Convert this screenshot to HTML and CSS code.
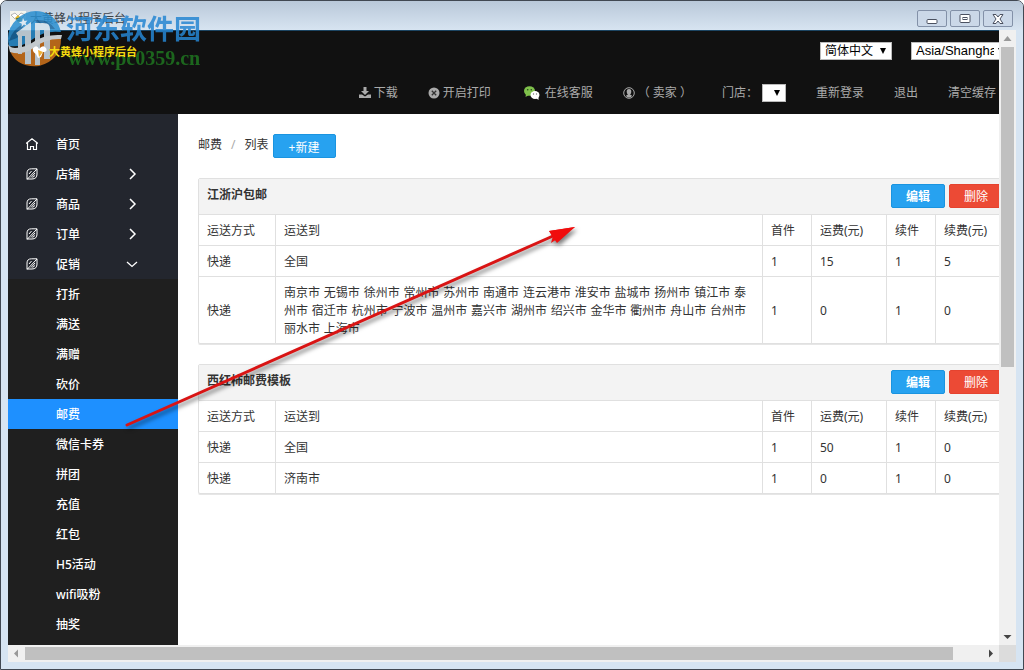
FILE: index.html
```html
<!DOCTYPE html>
<html lang="zh-CN">
<head>
<meta charset="utf-8">
<title>大黄蜂小程序后台</title>
<link rel="stylesheet" href="styles.css">
</head>
<body>
<svg class="defs" aria-hidden="true">
  <symbol id="leaf" viewBox="0 0 12 12"><path d="M1 11V5Q1 .8 5.500 .8H11V6q0 5-5 5zM11 1L1 11.500M3 6l2.500-3M5 9.500L9 5M6.500 9.500L9 7.500" fill="none" stroke="currentColor" stroke-width="1"/></symbol>
  <symbol id="right" viewBox="0 0 12 12"><path d="M4 1l5 5-5 5" fill="none" stroke="currentColor" stroke-width="1.5"/></symbol>
  <symbol id="down" viewBox="0 0 12 12"><path d="M1 4l5 4.500L11 4" fill="none" stroke="currentColor" stroke-width="1.3"/></symbol>
</svg>
<div class="window">
  <header class="titlebar">
    <svg class="app-icon" viewBox="0 0 16 16" aria-hidden="true"><rect width="16" height="16" fill="#f4f4ee"/><path d="M1 4l4-2 3 3 3-3 4 2-4 4H5z" fill="#fff" stroke="#999" stroke-width=".7"/><path d="M5 7l3-3 4 4-3 4z" fill="#e2b82d"/><path d="M6 8l4-1M7 10l3-1" stroke="#355a2b"/></svg>
    <span class="title">大黄蜂小程序后台</span>
    <div class="caption">
      <button type="button" aria-label="最小化"><svg viewBox="0 0 14 12"><rect x="2" y="6.500" width="10" height="4" rx="1" fill="#fff" stroke="#4b5160"/></svg></button>
      <button type="button" aria-label="最大化"><svg viewBox="0 0 14 12"><rect x="2" y="1.500" width="10" height="8" rx="1" fill="#fff" stroke="#4b5160"/><rect x="5" y="4.500" width="4" height="2" fill="#fff" stroke="#4b5160"/></svg></button>
      <button type="button" aria-label="关闭"><svg viewBox="0 0 14 12"><path d="M2 1.500h3l2 2.500 2-2.500h3L9 6l3 4.500H9L7 8l-2 2.500H2L5 6z" fill="#fff" stroke="#4b5160"/></svg></button>
    </div>
  </header>

  <div class="viewport">
    <div class="clip">
      <div class="page">
        <header class="topbar">
          <div class="brand">
            <svg viewBox="0 0 16 14" aria-hidden="true"><path d="M1 3q4-4 6 1 4-5 7-1 2 4-3 4l-2 5-3 1-2-4Q0 7 1 3z" fill="#fff"/><path d="M6 5l5 2-4 5z" fill="#efb23a"/></svg>
            <span>大黄蜂小程序后台</span>
          </div>
          <div class="tools">
            <div class="locale">
              <span class="pick lang"><select aria-label="语言"><option>简体中文</option></select><i></i></span>
              <span class="pick zone"><select aria-label="时区"><option>Asia/Shanghai</option></select><i></i></span>
            </div>
            <nav class="nav">
              <a href="#"><svg class="ic" viewBox="0 0 12 12"><path d="M4.500 0h3v4H10L6 8 2 4h2.500z" fill="currentColor"/><path d="M0 7.500h3l3 2 3-2h3V11H0z" fill="currentColor"/></svg>下载</a>
              <a href="#"><svg class="ic" viewBox="0 0 12 12"><circle cx="6" cy="6" r="5.500" fill="currentColor"/><path d="M3.800 3.800l4.400 4.400M8.200 3.800L3.800 8.200" stroke="#333" stroke-width="1.300"/></svg>开启打印</a>
              <a href="#"><svg class="wx" viewBox="0 0 16 14"><ellipse cx="5.500" cy="5" rx="5.500" ry="4.800" fill="#7fc14b"/><path d="M2 8l-.5 3L5 9z" fill="#7fc14b"/><ellipse cx="11" cy="9" rx="4.500" ry="4" fill="#fff"/><path d="M12 12l2.500 2V11z" fill="#fff"/><circle cx="3.700" cy="3.700" r=".8" fill="#25451a"/><circle cx="7.300" cy="3.700" r=".8" fill="#25451a"/><circle cx="9.500" cy="8" r=".7" fill="#777"/><circle cx="12.500" cy="8" r=".7" fill="#777"/></svg>在线客服</a>
              <a href="#"><svg class="ic" viewBox="0 0 12 12"><circle cx="6" cy="6" r="5.300" fill="none" stroke="currentColor"/><path d="M6 2Q8.500 2 8.300 5 8 7 7 7.500q2 .5 2 1.500-3 3-6 0 0-1 2-1.500Q4 7 3.700 5 3.500 2 6 2z" fill="currentColor"/></svg>（ 卖家 ）</a>
              <span class="store"><label for="store">门店：</label><span class="pick mini"><select id="store"><option></option></select><i></i></span></span>
              <a href="#">重新登录</a>
              <a href="#">退出</a>
              <a href="#">清空缓存</a>
            </nav>
          </div>
        </header>

        <div class="body">
          <aside class="sidebar">
            <a class="item" href="#"><svg viewBox="0 0 12 12"><path d="M0 5.500L6 .8l6 4.700M1.500 4.500v7H4.500v-3h3v3h3v-7" fill="none" stroke="currentColor" stroke-width="1.200"/></svg><span>首页</span></a>
            <a class="item" href="#"><svg><use href="#leaf"/></svg><span>店铺</span><svg><use href="#right"/></svg></a>
            <a class="item" href="#"><svg><use href="#leaf"/></svg><span>商品</span><svg><use href="#right"/></svg></a>
            <a class="item" href="#"><svg><use href="#leaf"/></svg><span>订单</span><svg><use href="#right"/></svg></a>
            <a class="item" href="#"><svg><use href="#leaf"/></svg><span>促销</span><svg><use href="#down"/></svg></a>
            <div class="submenu">
              <a href="#">打折</a>
              <a href="#">满送</a>
              <a href="#">满赠</a>
              <a href="#">砍价</a>
              <a class="active" href="#">邮费</a>
              <a href="#">微信卡券</a>
              <a href="#">拼团</a>
              <a href="#">充值</a>
              <a href="#">红包</a>
              <a href="#">H5活动</a>
              <a href="#">wifi吸粉</a>
              <a href="#">抽奖</a>
            </div>
          </aside>

          <main class="main">
            <div class="crumbs">
              <a href="#">邮费</a><span class="sep">/</span><span>列表</span>
              <button class="btn new" type="button">+新建</button>
            </div>

            <section class="panel">
              <div class="panel-head"><h2>江浙沪包邮</h2><div class="actions"><button class="btn edit" type="button">编辑</button><button class="btn del" type="button">删除</button></div></div>
              <table>
                <colgroup><col class="c-way"><col><col class="c-n"><col class="c-fee"><col class="c-n"><col class="c-last"></colgroup>
                <tr><th>运送方式</th><th>运送到</th><th>首件</th><th>运费(元)</th><th>续件</th><th>续费(元)</th></tr>
                <tr><td>快递</td><td>全国</td><td>1</td><td>15</td><td>1</td><td>5</td></tr>
                <tr><td>快递</td><td class="cities">南京市 无锡市 徐州市 常州市 苏州市 南通市 连云港市 淮安市 盐城市 扬州市 镇江市 泰州市 宿迁市 杭州市 宁波市 温州市 嘉兴市 湖州市 绍兴市 金华市 衢州市 舟山市 台州市 丽水市 上海市</td><td>1</td><td>0</td><td>1</td><td>0</td></tr>
              </table>
            </section>

            <section class="panel">
              <div class="panel-head"><h2>西红柿邮费模板</h2><div class="actions"><button class="btn edit" type="button">编辑</button><button class="btn del" type="button">删除</button></div></div>
              <table>
                <colgroup><col class="c-way"><col><col class="c-n"><col class="c-fee"><col class="c-n"><col class="c-last"></colgroup>
                <tr><th>运送方式</th><th>运送到</th><th>首件</th><th>运费(元)</th><th>续件</th><th>续费(元)</th></tr>
                <tr><td>快递</td><td>全国</td><td>1</td><td>50</td><td>1</td><td>0</td></tr>
                <tr><td>快递</td><td>济南市</td><td>1</td><td>0</td><td>1</td><td>0</td></tr>
              </table>
            </section>
          </main>
        </div>
      </div>
    </div>

    <div class="vbar">
      <svg class="dim" viewBox="0 0 17 17"><path d="M8.500 6l4 5h-8z" fill="currentColor"/></svg>
      <div class="track"><div class="thumb"></div></div>
      <svg viewBox="0 0 17 17"><path d="M8.500 11l4-4h-8z" fill="currentColor"/></svg>
    </div>
    <div class="hbar">
      <svg class="dim" viewBox="0 0 17 17"><path d="M6 8.500l4-4v8z" fill="currentColor"/></svg>
      <div class="track"><div class="thumb"></div></div>
      <svg viewBox="0 0 17 17"><path d="M11 8.500l-4-4v8z" fill="currentColor"/></svg>
    </div>
    <div class="corner"></div>
  </div>

  <div class="watermark">
    <svg viewBox="0 0 58 60" aria-hidden="true">
      <path d="M4 38Q0 22 12 11 24 0 38 4 52 8 56 24 40 22 28 31 16 40 4 38z" fill="#2a8fd0"/>
      <path d="M4 33Q8 20 20 15L12 30zM30 12q14-1 20 9-10-1-14 1z" fill="#17669f"/>
      <path d="M5 43Q16 47 29 38T56 31Q56 52 34 58 12 60 5 43z" fill="#d0741c"/>
      <path d="M11 25L26 14V56H20V28H17V46H13V28z" fill="#d3e2ec"/>
      <path d="M30 15h9q6 0 6 6v30h-6V22h-4v35h-5z" fill="#d3e2ec"/>
      <path d="M2 32Q3 40 10 40 20 40 30 33T57 27L56 31Q42 30 30 39T5 44z" fill="#e3eaee"/>
      <path d="M18 10l1.500 3 3-.5-2 2.500 1.500 3-3-1.500-2.500 2.500.3-3.300-3-1.400 3.300-.8z" fill="#dbe8f2"/>
    </svg>
    <div class="words"><span class="wm-name">河东软件园</span><span class="wm-url">www.pc0359.cn</span></div>
  </div>

  <svg class="pointer" viewBox="0 0 470 220" aria-hidden="true">
    <path d="M6 209L432 20" stroke="#d91414" stroke-width="3" stroke-linecap="round"/>
    <path d="M454 11L436 27 431 20 428 15z" fill="#f00d0d"/>
    <path d="M454 11L428 15 432 20 430 27z" fill="#f00d0d"/>
  </svg>
</div>
</body>
</html>
```
FILE: styles.css
```css
* { box-sizing: border-box; }

body {
  margin: 0;
  background: #fff;
  color: #333;
  font: 12px/18px "Noto Sans", "Noto Sans CJK SC", sans-serif;
}

a { color: inherit; text-decoration: none; }
button, select { font: inherit; }
svg { flex: none; display: block; }
.defs { position: absolute; width: 0; height: 0; }

/* Window frame */
.window {
  position: relative;
  display: flex;
  flex-direction: column;
  height: 100vh;
  padding: 0 7px 7px;
  border: 1px solid #414852;
  border-radius: 7px 7px 0 0;
  background: #d6e4f2;
  overflow: hidden;
}

.titlebar {
  display: flex;
  align-items: center;
  gap: 4px;
  height: 29px;
  margin: 0 -7px;
  padding: 6px 2px 0 9px;
  background: linear-gradient(#b9c8d9, #d7e4f1);
}
.app-icon { width: 16px; height: 16px; }
.title { color: #3c4248; }
.caption { display: flex; gap: 3px; margin-left: auto; padding-right: 8px; }
.caption button {
  display: flex;
  align-items: center;
  justify-content: center;
  width: 30px;
  height: 17px;
  padding: 0;
  border: 1px solid #8391a8;
  border-radius: 2px;
  background: #cbd8e8;
}
.caption svg { width: 14px; height: 12px; }

.viewport {
  flex: 1;
  min-height: 0;
  display: grid;
  grid-template: minmax(0, 1fr) 17px / minmax(0, 1fr) 17px;
}
.clip { overflow: hidden; background: #fff; }
.page {
  display: flex;
  flex-direction: column;
  width: calc(100% + 33px);
  height: 100%;
}

/* Top bar */
.topbar {
  display: flex;
  justify-content: space-between;
  height: 84px;
  padding-top: 11px;
  border-top: 1px solid #1c4562;
  background: #111;
  color: #aaa;
}
.brand {
  position: relative;
  z-index: 1;
  display: flex;
  align-items: center;
  gap: 1px;
  height: 20px;
  padding-left: 24px;
  color: #f7dc10;
  font-size: 11px;
  font-weight: bold;
}
.brand svg { width: 16px; height: 14px; }
.tools { display: flex; flex-direction: column; gap: 24px; }
.locale { display: flex; justify-content: flex-end; gap: 19px; padding-right: 25px; }
.nav { display: flex; align-items: center; gap: 30px; padding-right: 36px; }
.nav a, .store { display: flex; align-items: center; white-space: nowrap; }
.nav .ic { width: 12px; height: 12px; margin-right: 3px; }
.nav .wx { width: 16px; height: 14px; margin: 0 5px 0 3px; }
.store { gap: 4px; }

.pick { position: relative; display: flex; }
.pick select {
  appearance: none;
  width: 100%;
  height: 18px;
  padding: 0 16px 0 4px;
  border: 1px solid #bbb;
  border-radius: 0;
  background: #fff;
  color: #000;
  line-height: 16px;
}
.pick i {
  position: absolute;
  right: 6px;
  top: 6px;
  border: solid transparent;
  border-width: 6px 3px 0;
  border-top-color: #000;
}
.lang { width: 72px; }
.zone { width: 96px; }
.zone select { font: 13px/16px "Liberation Sans", sans-serif; padding-right: 12px; }
.zone i { right: 3px; }
.mini { width: 24px; }

/* Sidebar */
.body { flex: 1; min-height: 0; display: flex; }
.sidebar {
  display: flex;
  flex-direction: column;
  flex: none;
  width: 170px;
  padding-top: 15px;
  background: #23262e;
  color: #fff;
  font-weight: 500;
}
.item {
  flex: none;
  display: flex;
  align-items: center;
  height: 30px;
  padding: 0 40px 0 18px;
}
.item svg { width: 12px; height: 12px; }
.item span { flex: 1; padding: 2px 0 0 18px; }
.submenu { flex: 1; background: #1f1f1f; }
.submenu a { display: block; height: 30px; padding: 1px 0 0 48px; line-height: 30px; }
.submenu .active { background: #1e90ff; }

/* Content */
.main { flex: 1; min-width: 0; padding: 20px; }
.crumbs { display: flex; align-items: flex-start; line-height: 22px; margin-bottom: 20px; }
.sep { padding: 0 9px; color: #aaa; }
.btn {
  width: 54px;
  height: 24px;
  padding: 2px 0 0;
  border: 1px solid #1a94e0;
  border-radius: 2px;
  background: #27a2f0;
  color: #fff;
}
.new { width: 63px; margin-left: 4px; }
.edit { font-weight: bold; }
.del { border-color: #e5432f; background: #ec4a35; }

.panel {
  margin-bottom: 19px;
  border: 1px solid #e0e0e0;
  border-radius: 2px;
  box-shadow: 0 1px 0 #e6e6e6;
}
.panel-head {
  display: flex;
  justify-content: space-between;
  padding: 5px 8px 6px;
  background: #f3f3f3;
}
.panel-head h2 { margin: 0; font-size: 12px; line-height: 22px; }
.actions { display: flex; gap: 4px; }

table { width: 100%; border-collapse: separate; border-spacing: 0; table-layout: fixed; }
th, td {
  padding: 7px 0 5px 8px;
  border-top: 1px solid #e0e0e0;
  border-left: 1px solid #e0e0e0;
  font-weight: normal;
  text-align: left;
}
th:first-child, td:first-child { border-left: 0; }
.c-way { width: 76px; }
.c-n { width: 49px; }
.c-fee { width: 75px; }
.c-last { width: 76px; }
.cities { padding-right: 8px; font-family: "DejaVu Sans", "Noto Sans CJK SC", sans-serif; }
.panel + .panel { margin-top: 20px; }

/* Scrollbars */
.vbar, .hbar { display: flex; background: #f0f0f0; color: #444; }
.vbar { flex-direction: column; }
.vbar svg, .hbar svg { width: 17px; height: 17px; }
.vbar .dim, .hbar .dim { color: #999; }
.track { flex: 1; }
.thumb { background: #c0c0c0; }
.vbar .thumb { height: 55%; margin: 0 2px; }
.hbar .track { padding: 2px 0; }
.hbar .thumb { width: 97%; height: 100%; }
.corner { background: #dcdcdc; }

/* Overlays */
.watermark {
  position: absolute;
  left: 4px;
  top: 7px;
  display: flex;
  gap: 3px;
  opacity: .85;
  pointer-events: none;
}
.watermark svg { width: 58px; height: 60px; }
.words { display: flex; flex-direction: column; font-weight: bold; }
.wm-name { color: #2686d2; font: bold 27px/40px "Noto Sans CJK SC", sans-serif; }
.wm-url { padding-left: 2px; color: #1f7520; font: bold 20px/20px "Liberation Serif", serif; }
.pointer {
  position: absolute;
  left: 120px;
  top: 215px;
  width: 470px;
  height: 220px;
  filter: drop-shadow(2px 3px 2px rgba(0, 0, 0, .5));
  pointer-events: none;
}
```
